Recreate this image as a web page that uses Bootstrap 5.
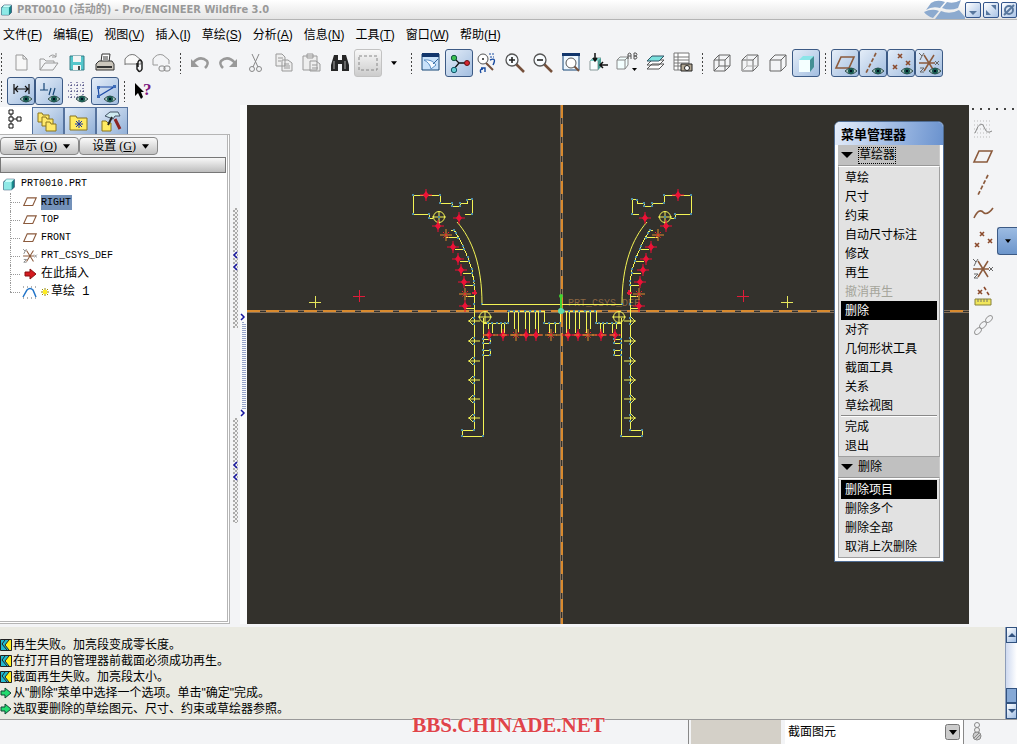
<!DOCTYPE html>
<html lang="zh-CN">
<head>
<meta charset="utf-8">
<meta name="viewport" content="width=device-width, initial-scale=1">
<title>PRT0010 (活动的) - Pro/ENGINEER Wildfire 3.0</title>
<link href="https://cdn.jsdelivr.net/npm/bootstrap@5.3.0/dist/css/bootstrap.min.css" rel="stylesheet">
<script src="https://cdn.jsdelivr.net/npm/bootstrap@5.3.0/dist/js/bootstrap.bundle.min.js"></script>
<style>
body{font:12px/16px "Liberation Sans","Noto Sans CJK SC",sans-serif;color:#000;background:#f3f4f6}
button,select{font:inherit;color:inherit;border:0;background:none;padding:0;border-radius:0}
svg{display:block;flex-shrink:0}
main{min-height:0}
.titlebar{height:20px;background:linear-gradient(#fff,#e4e4e4);border-bottom:1px solid #b4b4b4}
.titlebar h1{font:bold 11px/18px "DejaVu Sans Condensed","Noto Sans CJK SC",sans-serif;color:#999}
.winbtns{gap:2px}
.winbtn{width:16px;height:16px;border:1px solid #33558c;border-radius:2px;background:linear-gradient(135deg,#fff,#a9c3e6)}
.menus{height:29px;gap:11px;padding:0 3px}
.tool{width:28px;height:28px;border:1px solid transparent;border-radius:3px}
.tool svg,.tab svg{width:26px;height:26px}
.tool.on{border-color:#3c5a85;background:linear-gradient(135deg,#e4edf8,#a3bee0)}
.tool.soft{border-color:#c2c2c2;background:linear-gradient(#f8f8f8,#ccc)}
.grip{width:11px;height:22px;background:radial-gradient(circle,#444 1px,transparent 1px) 0 0/11px 4px}
.grip.first{width:7px;background-size:3px 4px;background-repeat:repeat-y}
.drop{width:24px}
.side{width:230px}
.tabs{padding-top:2px}
.tab{width:32px;height:27px;border:1px solid #56739e;border-bottom:0;background:linear-gradient(135deg,#dfeaf7,#93b1d8)}
.tab.now{background:#fff;border-color:#fff}
.tree-pane{border:solid #b5b5b5;border-width:1px 3px 3px 0;border-right-style:double;border-bottom-style:double;background:#fff}
.opts{background:#f3f4f6;height:22px;padding-top:2px}
.opt{width:79px;height:18px;border:1px solid #888;border-radius:4px;background:linear-gradient(#fafafa,#c3c3c3);gap:6px;font-family:"Liberation Serif","Noto Sans CJK SC",serif;line-height:15px;white-space:nowrap}
.headbar{height:16px;border:1px solid #777;background:linear-gradient(#f8f8f8,#bdbdbd);margin-right:1px}
.tree{font:10px/18px "Liberation Mono","Noto Sans CJK SC",monospace;padding-top:2px}
.tree .cn{font-size:12px}
.tree .leaf{height:18px}
.kids li{margin-left:10px;position:relative;padding-left:11px}
.kids li::before{content:"";position:absolute;left:0;top:0;bottom:0;border-left:1px dotted #999}
.kids li:last-child::before{bottom:9px}
.kids li::after{content:"";position:absolute;left:0;top:9px;width:10px;border-top:1px dotted #999}
.kids li svg{margin-right:2px}
.picked{background:#7391b9;line-height:15px;padding:0 1px 0 0}
.splitA{width:10px;padding-top:103px;gap:90px}
.splitB{width:7px;padding-top:208px;background:#fafbfc}
.handle{width:5px;background:repeating-conic-gradient(#aaa 0 25%,#f2f2f2 0 50%) 0 0/4px 4px}
.canvas{background:#33312c;min-width:0}
.manager{position:absolute;right:25px;top:16px;width:110px;background:#fff;border:1px solid #4f6c93;border-radius:6px 6px 0 0;padding:0 3px 3px}
.manager h2{font:bold 13px/23px "Noto Sans CJK SC",sans-serif;margin:0 -3px;padding-left:6px;border-radius:5px 5px 0 0;background:linear-gradient(100deg,#e6eefb,#a5bfe6 50%,#6a92ce)}
.sect{height:21px;background:#c0c0c0;border-bottom:1px solid #999;padding-left:3px;gap:5px;border-right:1px solid #ccc}
.sect .focusbox{border:1px dotted #000;line-height:15px}
.menu-items{background:#e2e2e2;border:1px solid #a0a0a0;border-top-color:#fff;padding:1px 2px}
.menu-items button{display:block;width:100%;height:19px;text-align:left;padding-left:4px;line-height:18px}
.menu-items .act{background:#000;color:#fff}
.menu-items button:disabled{color:#a5a59b}
.menu-items hr{margin:0;border-top:1px solid #888;border-bottom:1px solid #fff;opacity:1}
.rail{width:48px;background:#f3f4f6}
.rail .dots{height:10px;background:radial-gradient(circle,#444 1px,transparent 1px) 0 0/8px 8px repeat-x}
.flyout{width:20px;height:28px;border:1px solid #3c5a85;border-right:0;border-radius:3px 0 0 3px;background:linear-gradient(#9cbbe2,#6c95cb)}
.messages{height:93px;background:#eaeae2;border-bottom:1px solid #999;margin-top:3px}
.log{padding-top:10px}
.scroller{width:12px;border-left:1px solid #8d9db8;background:linear-gradient(90deg,#cfdaf0,#fff)}
.scroller button{height:16px;border:1px solid #31527f;background:linear-gradient(135deg,#fff,#9fbde4)}
.scroller .thumb{height:15px;border:1px solid #31527f;background:#86a9d6}
.statusbar{height:24px}
.stamp{top:-7px;font:bold 21px/24px "Liberation Serif",serif;color:#e0444a;text-shadow:0 0 2px #fff}
.divider{width:3px;border-left:1px solid #888}
.greybox{width:90px;background:#d4d0c8}
.picker{width:183px;border-right:1px solid #888;padding-left:4px}
.picker select{appearance:none;background:#fff;padding-left:3px;width:178px}
.picker svg{position:absolute;right:3px;top:4px;pointer-events:none}
</style>
</head>
<body class="d-flex flex-column vh-100 overflow-hidden m-0">
<svg width="0" height="0" class="position-absolute" aria-hidden="true"><defs>
<symbol id="eye" viewBox="0 0 12 8"><path d="M0 4Q6-2 12 4Q6 10 0 4Z" fill="#a9c4c0" stroke="#35504f"/><circle cx="6" cy="4" r="3" fill="#17594f"/><rect x="5" y="3" width="2" height="2" fill="#012"/></symbol>
<symbol id="plane" viewBox="0 0 26 26"><path d="M9 7H22L17 18H4Z" fill="none" stroke="#8b5a3c" stroke-width="1.6"/></symbol>
<symbol id="axis" viewBox="0 0 26 26"><path d="M18 3L8 23" fill="none" stroke="#8b5a3c" stroke-width="1.7" stroke-dasharray="4 2"/></symbol>
<symbol id="points" viewBox="0 0 26 26"><path d="M10 4l4 4m0-4l-4 4M18 11l4 4m0-4l-4 4M5 15l4 4m0-4l-4 4" stroke="#8b4a2c" stroke-width="1.6"/></symbol>
<symbol id="csys" viewBox="0 0 26 26"><path d="M3 13H19M8 5L18 21M18 5L8 21" stroke="#8b5a3c" stroke-width="1.5"/><path d="M3 3l3 3 2-3M6 6l-2 4M19 11l4 4m0-4l-4 4M4 18h4l-4 4h4" fill="none" stroke="#666"/></symbol>
<symbol id="cube" viewBox="0 0 26 26"><path d="M5 10H16V21H5ZM5 10L10 5H21L16 10M21 5V16L16 21" fill="none" stroke="#666"/></symbol>
<symbol id="solid" viewBox="0 0 16 16"><path d="M2 5L5 2H14V11L11 14H2Z" fill="#168b8b" stroke="#246"/><path d="M2 5H11V14H2Z" fill="#8ee9e6"/><path d="M3 5L5 2H14L11 5Z" fill="#c9fffa"/></symbol>
<symbol id="tri" viewBox="0 0 8 5"><path d="M0 0H8L4 5Z"/></symbol>
<symbol id="lens" viewBox="0 0 26 26"><path d="M14 14l8 8" stroke="#75503b" stroke-width="2.5"/><circle cx="10" cy="10" r="6" fill="#f8fcff" stroke="#555" stroke-width="1.3"/></symbol>
<symbol id="fail" viewBox="0 0 12 12"><path d="M.5.5H11.5V11.5H.5Z" fill="#20bcd0" stroke="#222"/><path d="M11 1V11H9L5 6L9 1Z" fill="#fff21c"/><path d="M5 1L2 5L7 11M9 1L5 6L9 11" fill="none" stroke="#222"/></symbol>
<symbol id="go" viewBox="0 0 12 12"><path d="M1 4H5V1L11 6L5 11V8H1Z" fill="#23dc70" stroke="#143"/></symbol>
<g id="star"><path d="M-6 0H6M0-6V6" stroke="#f20d35"/><path d="M0-4L3 0 0 4-3 0Z" fill="#ed1236"/></g>
<g id="spark"><path d="M-6 0H6M0-6V6" stroke="#e58a2c"/><path d="M-3-3L3 3M3-3L-3 3" stroke="#f3202f" stroke-dasharray="2 1"/></g>
<g id="node"><path d="M-6 0H6M-1-4L-5 0L-1 4" fill="none" stroke="#f4f455"/><path d="M0-4V-2M0 2V4" stroke="#4c8ba7" stroke-width="2"/></g>
<g id="half">
 <path d="M429 218V214H413V195H440V203H452V206H460V203H467V199H472V214H465M429 218H433M451 230H454L459 238 463 246 468 258 472 270 474 283V430H462V436H483V318M446 237H458M455 249H464M460 261H468M463 273H472M465 285H474M466 296H474M466 308H474M483 339H490V343H483M483 350H490V355H483M483 323H508V311H544V323H552M488 323V329M492 323V333M501 323V333M504 323V333M514 311V329M518 311V333M525 311V329M529 311V333M535 311V329M538 311V333M549 323V333" fill="none" stroke="#f4f455" shape-rendering="crispEdges"/>
 <g fill="none" stroke="#f4f455"><path d="M457 222C472 239 482 265 482 304"/><circle cx="439" cy="217" r="5.5"/><path d="M432 217H446M439 211V228"/><circle cx="485" cy="317" r="5.5"/><path d="M478 317H492M485 311V324"/></g>
 <path d="M413 195h0M440 195h0M440 203h0M452 203h0M452 206h0M460 206h0M460 203h0M467 200h0M472 199h0M472 214h0M413 214h0M429 214h0M429 218h0M439 217h0M454 230h0M456 233h0M458 238h0M463 246h0M464 249h0M468 257h0M469 261h0M472 269h0M472 273h0M474 281h0M474 285h0M474 304h0M482 304h0M462 430h0M474 430h0M462 436h0M483 436h0M483 339h0M490 339h0M490 343h0M483 343h0M483 350h0M490 350h0M490 355h0M483 355h0M488 323h0M492 323h0M497 323h0M501 323h0M505 323h0M508 323h0M509 311h0M514 311h0M519 311h0M525 311h0M530 311h0M535 311h0M540 311h0M544 323h0M549 323h0" stroke="#4c8ba7" stroke-width="2" stroke-linecap="square"/>
 <use href="#node" x="474" y="321"/><use href="#node" x="474" y="341"/><use href="#node" x="474" y="361"/><use href="#node" x="474" y="380"/><use href="#node" x="474" y="399"/><use href="#node" x="474" y="418"/>
 <use href="#star" x="426" y="195"/><use href="#star" x="459" y="218"/><use href="#star" x="438" y="226"/><use href="#spark" x="446" y="235"/><use href="#star" x="453" y="247"/><use href="#star" x="458" y="259"/><use href="#star" x="461" y="270"/><use href="#star" x="464" y="282"/><use href="#spark" x="465" y="294"/><use href="#star" x="465" y="306"/><path d="M472 293h5M475 290v5" stroke="#e11b39" stroke-width="2"/>
 <use href="#star" x="489" y="335"/><use href="#star" x="503" y="335"/><use href="#spark" x="516" y="335"/><use href="#star" x="526" y="335"/><use href="#star" x="536" y="335"/>
</g>
</defs></svg>

<header>
<div class="titlebar d-flex align-items-center">
 <svg width="13" height="16"><use href="#solid" width="13" height="16"/></svg>
 <h1 class="m-0 ms-1 flex-grow-1 text-nowrap">PRT0010 (活动的) - Pro/ENGINEER Wildfire 3.0</h1>
 <svg width="42" height="19" viewBox="0 0 42 19"><path d="M8 3Q14-1 22 2L17 8Q9 6 3 10ZM24 2Q31 4 38 0L35 8Q27 11 19 8ZM1 12Q9 8 16 11L10 18Q4 16 1 12ZM18 11Q27 15 36 10L42 17V19H12Z" fill="#8caacf"/></svg>
 <div class="winbtns d-flex">
 <button class="winbtn" aria-label="最小化"><svg width="14" height="14"><path d="M3 8H11L7 12Z" fill="#58779e"/></svg></button>
 <button class="winbtn" aria-label="还原"><svg width="14" height="14"><path d="M7 2H12V7ZM2 7V12H7Z" fill="#58779e"/></svg></button>
 <button class="winbtn" aria-label="关闭"><svg width="14" height="14"><circle cx="7" cy="7" r="4" fill="none" stroke="#58779e" stroke-width="2"/><path d="M2 12L12 2" stroke="#58779e" stroke-width="2"/></svg></button>
 </div>
</div>
<nav class="menus d-flex align-items-center text-nowrap" aria-label="主菜单">
 <button>文件(<u>F</u>)</button><button>编辑(<u>E</u>)</button><button>视图(<u>V</u>)</button><button>插入(<u>I</u>)</button><button>草绘(<u>S</u>)</button><button>分析(<u>A</u>)</button><button>信息(<u>N</u>)</button><button>工具(<u>T</u>)</button><button>窗口(<u>W</u>)</button><button>帮助(<u>H</u>)</button>
</nav>
<div class="d-flex align-items-center" role="toolbar" aria-label="标准">
 <span class="grip first"></span>
 <button class="tool" aria-label="新建"><svg viewBox="0 0 26 26"><path d="M8 5H15L19 9V20H8ZM15 5V9H19" fill="#f7f7f7" stroke="#999"/></svg></button>
 <button class="tool" aria-label="打开"><svg viewBox="0 0 26 26"><path d="M4 20V9H8L10 11H18V13M4 20L9 13H22L17 20ZM13 7Q17 3 20 7M20 3V7H16" fill="none" stroke="#999"/></svg></button>
 <button class="tool" aria-label="保存"><svg viewBox="0 0 26 26"><path d="M6 6H20V20H6Z" fill="#55c6cb" stroke="#357d86"/><path d="M9 6H17V12H9ZM9 15H17V20H9Z" fill="#f4f4f4"/><path d="M14 16h2v4h-2z" fill="#444"/></svg></button>
 <button class="tool" aria-label="打印"><svg viewBox="0 0 26 26"><path d="M9 12L10 4H18L17 12" fill="#fff" stroke="#333"/><path d="M11 7h5M11 9h5" stroke="#333"/><path d="M4 14L7 11H20L22 14V20H4Z" fill="#cbc6bc" stroke="#333"/><path d="M5 17H20" stroke="#333" stroke-width="2"/></svg></button>
 <button class="tool" aria-label="发送附件"><svg viewBox="0 0 26 26"><path d="M5 15V9Q9 3 15 5L21 10V14H5" fill="#fafafa" stroke="#777"/><path d="M17 13V19Q20 24 22 19V12Q20 8 18 12V17" fill="none" stroke="#222" stroke-width="1.5"/></svg></button>
 <button class="tool" aria-label="发送链接"><svg viewBox="0 0 26 26"><path d="M5 15V9Q9 3 15 5L21 10V14M5 15H10" fill="none" stroke="#999"/><rect x="11" y="16" width="6" height="5" rx="2" fill="none" stroke="#888"/><rect x="16" y="16" width="6" height="5" rx="2" fill="none" stroke="#888"/></svg></button>
 <span class="grip"></span>
 <button class="tool" aria-label="撤消"><svg viewBox="0 0 26 26"><path d="M6 13Q13 5 20 11Q22 14 18 18" fill="none" stroke="#999" stroke-width="2.5"/><path d="M4 9V17H12Z" fill="#999"/></svg></button>
 <button class="tool" aria-label="重做"><svg viewBox="0 0 26 26"><path d="M20 13Q13 5 6 11Q4 14 8 18" fill="none" stroke="#999" stroke-width="2.5"/><path d="M22 9V17H14Z" fill="#999"/></svg></button>
 <button class="tool" aria-label="剪切"><svg viewBox="0 0 26 26"><path d="M9 4L15 17M16 4L10 17" stroke="#888"/><circle cx="9" cy="19" r="2.5" fill="none" stroke="#888"/><circle cx="16" cy="19" r="2.5" fill="none" stroke="#888"/></svg></button>
 <button class="tool" aria-label="复制"><svg viewBox="0 0 26 26"><path d="M5 4H11L14 7V16H5Z M11 10H17L21 13V21H11Z" fill="#eee" stroke="#999"/><path d="M7 8h5M7 11h3M13 14h5M13 16h6M13 18h6" stroke="#999"/></svg></button>
 <button class="tool" aria-label="粘贴"><svg viewBox="0 0 26 26"><path d="M4 6H18V20H4ZM8 4H14V8H8ZM11 11H17L21 14V21H11Z" fill="#eee" stroke="#999"/><path d="M13 15h5M13 18h6" stroke="#999"/></svg></button>
 <button class="tool" aria-label="查找"><svg viewBox="0 0 26 26"><path d="M7 5h4v5h4V5h4l3 10v6h-7v-7h-4v7H4v-6Z" fill="#262626"/><path d="M7 11v8M18 11v8" stroke="#aaa"/></svg></button>
 <button class="tool soft" aria-label="选择框"><svg viewBox="0 0 26 26"><rect x="4" y="6" width="18" height="14" fill="none" stroke="#888" stroke-dasharray="3 2"/></svg></button>
 <button class="drop d-flex justify-content-center" aria-label="选择选项"><svg width="6" height="4"><use href="#tri" width="6" height="4"/></svg></button>
 <span class="grip"></span>
 <button class="tool" aria-label="重画"><svg viewBox="0 0 26 26"><path d="M4 4H21V20H4Z" fill="#c9e2fa" stroke="#174777"/><path d="M4 3H21V7H4Z" fill="#12366c"/><path d="M6 10Q14 9 18 15L13 19Q12 13 6 10Z" fill="#f4faff" stroke="#5b8fc4"/><path d="M15 14L20 9" stroke="#35679b"/></svg></button>
 <button class="tool on" aria-label="旋转中心"><svg viewBox="0 0 26 26"><path d="M8 8L13 13L8 19M13 13H20" fill="none" stroke="#111" stroke-width="1.3"/><circle cx="8" cy="8" r="2.7" fill="#39be50" stroke="#154"/><circle cx="8" cy="20" r="2.7" fill="#65cdd2" stroke="#156"/><circle cx="21" cy="13" r="2.5" fill="#d62631" stroke="#611"/></svg></button>
 <button class="tool" aria-label="定向模式"><svg viewBox="0 0 26 26"><path d="M12 13l7 7" stroke="#75503b" stroke-width="2"/><circle cx="9" cy="9" r="5" fill="#fff" stroke="#555"/><path d="M8 9h2M9 8v2" stroke="#222"/><path d="M15 4h6M16 7h4" stroke="#174aa0" stroke-dasharray="2 1"/><path d="M16 10q7-3 3 5M9 19q-4 0-2 4M7 18h4v4" fill="none" stroke="#174aa0" stroke-width="1.4"/></svg></button>
 <button class="tool" aria-label="放大"><svg viewBox="0 0 26 26"><use href="#lens"/><path d="M7 10h6M10 7v6" stroke="#222" stroke-width="1.6"/></svg></button>
 <button class="tool" aria-label="缩小"><svg viewBox="0 0 26 26"><use href="#lens"/><path d="M7 10h6" stroke="#222" stroke-width="1.6"/></svg></button>
 <button class="tool" aria-label="重新调整"><svg viewBox="0 0 26 26"><path d="M5 4H21V20H5Z" fill="#edf7ff" stroke="#174777"/><path d="M4 3H22V6H4Z" fill="#12366c"/><path d="M16 16l5 5" stroke="#75503b" stroke-width="2"/><circle cx="13" cy="13" r="5" fill="#fff" stroke="#555"/></svg></button>
 <button class="tool" aria-label="重定向"><svg viewBox="0 0 26 26"><path d="M4 11L7 8H15L12 11V20H4Z" fill="#f8ffff" stroke="#899"/><path d="M4 11L7 8H15L12 11Z" fill="#7ed5cc"/><path d="M12 11L15 8V17L12 20Z" fill="#489b91"/><path d="M9 3v7M7 8l2 3 2-3M22 15H14M17 12l-3 3 3 3" fill="none" stroke="#111" stroke-width="1.5"/></svg></button>
 <button class="tool" aria-label="视图列表"><svg viewBox="0 0 26 26"><path d="M3 10L6 7H14V15L11 19H3ZM3 10H11V19M11 10L14 7" fill="#f3ffff" stroke="#888"/><path d="M14 9V4q2-2 3 0v5M14 6h3M20 3v6h2q2-2 0-3h-2 2q2-2 0-3Z" fill="none" stroke="#555"/><path d="M18 18h5l-2.500 3Z"/></svg></button>
 <button class="tool" aria-label="层"><svg viewBox="0 0 26 26"><path d="M5 19L10 14H22L17 19ZM5 15L10 10H22L17 15Z" fill="#fff" stroke="#555"/><path d="M5 11L10 6H22L17 11Z" fill="#7ce1de" stroke="#356"/></svg></button>
 <button class="tool" aria-label="视图管理器"><svg viewBox="0 0 26 26"><path d="M4 3H19V20H4ZM4 7H19M4 10H19M4 13H19M4 16H19M8 3V20" fill="#fff" stroke="#777"/><path d="M11 14H22V21H11Z" fill="#b3a894" stroke="#222"/><circle cx="17" cy="18" r="2.5" fill="#fff" stroke="#222"/></svg></button>
 <span class="grip"></span>
 <button class="tool" aria-label="线框"><svg viewBox="0 0 26 26"><use href="#cube"/><path d="M10 5V16H21M5 21L10 16" fill="none" stroke="#666"/></svg></button>
 <button class="tool" aria-label="隐藏线"><svg viewBox="0 0 26 26"><use href="#cube"/><path d="M10 5V16H21M5 21L10 16" fill="none" stroke="#aaa"/></svg></button>
 <button class="tool" aria-label="无隐藏线"><svg viewBox="0 0 26 26"><use href="#cube"/></svg></button>
 <button class="tool on" aria-label="着色"><svg viewBox="0 0 26 26"><path d="M6 10H17V22H6Z" fill="#f4ffff"/><path d="M6 10L10 6H21L17 10Z" fill="#8be5e8"/><path d="M17 10L21 6V17L17 22Z" fill="#438f94"/></svg></button>
 <span class="grip"></span>
 <button class="tool on" aria-label="平面显示"><svg viewBox="0 0 26 26"><use href="#plane"/><use href="#eye" x="13" y="17" width="12" height="8"/></svg></button>
 <button class="tool on" aria-label="轴显示"><svg viewBox="0 0 26 26"><use href="#axis" x="-2"/><use href="#eye" x="12" y="17" width="12" height="8"/></svg></button>
 <button class="tool on" aria-label="点显示"><svg viewBox="0 0 26 26"><use href="#points"/><use href="#eye" x="13" y="17" width="12" height="8"/></svg></button>
 <button class="tool on" aria-label="坐标系显示"><svg viewBox="0 0 26 26"><use href="#csys"/><use href="#eye" x="13" y="17" width="12" height="8"/></svg></button>
</div>
<div class="d-flex align-items-center" role="toolbar" aria-label="草绘器">
 <span class="grip first"></span>
 <button class="tool on" aria-label="显示尺寸"><svg viewBox="0 0 26 26"><path d="M6 6V16M21 6V16M7 11H20M10 8L7 11L10 14M17 8L20 11L17 14" fill="none" stroke="#111" stroke-width="1.2"/><use href="#eye" x="12" y="17" width="12" height="8"/></svg></button>
 <button class="tool on" aria-label="显示约束"><svg viewBox="0 0 26 26"><path d="M8 5V12M4 12H12M15 10L13 17M19 10L17 17" stroke="#174777" stroke-width="1.2"/><use href="#eye" x="12" y="17" width="12" height="8"/></svg></button>
 <button class="tool" aria-label="显示栅格"><svg viewBox="0 0 26 26"><path d="M4 7H22M4 13H22M4 19H14M7 4V21M13 4V21M19 4V17" stroke="#226" stroke-dasharray="1 2"/><use href="#eye" x="12" y="17" width="12" height="8"/></svg></button>
 <button class="tool on" aria-label="显示顶点"><svg viewBox="0 0 26 26"><path d="M6 9L22 9L7 18Z" fill="none" stroke="#1c4ba6" stroke-width="1.2"/><path d="M5 8h3v3H5zM21 7h3v3h-3zM5 17h3v3H5z" fill="#3d6cb8"/><use href="#eye" x="12" y="17" width="12" height="8"/></svg></button>
 <span class="grip"></span>
 <button class="tool" aria-label="帮助"><svg viewBox="0 0 26 26"><path d="M4 5V18L7 15L10 21L12 19L10 14H13Z"/><text x="12" y="17" font-family="Liberation Serif" font-weight="bold" font-size="17" fill="#7b167e">?</text></svg></button>
</div>
</header>

<main class="d-flex flex-grow-1">
<section class="side d-flex flex-column" aria-label="模型树">
 <div class="tabs d-flex">
 <button class="tab now" aria-label="模型树"><svg viewBox="0 0 26 26"><path d="M8 2h4v4H8zM8 9h4v4H8zM8 16h4v4H8zM16 9h4v4h-4zM10 6v3M10 13v3M12 11h4" fill="#fff" stroke="#111"/></svg></button>
 <button class="tab" aria-label="文件夹"><svg viewBox="0 0 26 26"><g fill="#ffe96a" stroke="#8a741f"><path d="M5 5h4l1 2h6v7H5z"/><path d="M9 9h4l1 2h6v7H9z"/><path d="M13 14h4l1 2h5v7H13z"/></g></svg></button>
 <button class="tab" aria-label="收藏夹"><svg viewBox="0 0 26 26"><path d="M5 8h6l1 2h10v12H5z" fill="#ffeb62" stroke="#8a741f"/><path d="M10 16h8M14 12v8M11 13l6 6M17 13l-6 6" stroke="#1734a8"/></svg></button>
 <button class="tab" aria-label="连接"><svg viewBox="0 0 26 26"><path d="M5 13h4l2 2h3v8H5z" fill="#ffeb62" stroke="#8a741f"/><path d="M8 8L13 4H21L23 8H18L16 11Z" fill="#cfeaf0" stroke="#456"/><path d="M15 9L11 17" stroke="#222" stroke-width="2"/><path d="M18 11L23 21" stroke="#8b2323" stroke-width="3"/></svg></button>
 </div>
 <div class="tree-pane flex-grow-1">
 <div class="opts d-flex">
  <button class="opt d-flex align-items-center justify-content-end pe-2"><span>显示 (<u>O</u>)</span><svg width="7" height="5"><use href="#tri" width="7" height="5"/></svg></button>
  <button class="opt d-flex align-items-center justify-content-end pe-2"><span>设置 (<u>G</u>)</span><svg width="7" height="5"><use href="#tri" width="7" height="5"/></svg></button>
 </div>
 <div class="headbar"></div>
 <ul class="tree list-unstyled m-0 text-nowrap">
  <li class="leaf d-flex align-items-center"><svg width="17" height="15" class="me-1"><use href="#solid" x="2" width="14" height="15"/></svg>PRT0010.PRT</li>
  <li><ul class="kids list-unstyled">
  <li class="leaf d-flex align-items-center"><svg width="18" height="18"><use href="#plane" width="18" height="18"/></svg><span class="picked">RIGHT</span></li>
  <li class="leaf d-flex align-items-center"><svg width="18" height="18"><use href="#plane" width="18" height="18"/></svg>TOP</li>
  <li class="leaf d-flex align-items-center"><svg width="18" height="18"><use href="#plane" width="18" height="18"/></svg>FRONT</li>
  <li class="leaf d-flex align-items-center"><svg width="18" height="18"><use href="#csys" width="18" height="18"/></svg>PRT_CSYS_DEF</li>
  <li class="leaf d-flex align-items-center cn"><svg width="18" height="18"><path d="M4 7H9V4L15 9L9 14V11H4Z" fill="#d51a20" stroke="#811"/></svg>在此插入</li>
  <li class="leaf d-flex align-items-center cn"><svg width="18" height="18"><path d="M2 4H16M2 15H16" stroke="#666" stroke-dasharray="1 3"/><path d="M2 14L6 7Q9 4 12 7L15 14" fill="none" stroke="#2274c8" stroke-width="1.5"/></svg><svg width="8" height="12"><path d="M0 6H8M4 2V10M1 3L7 9M7 3L1 9" stroke="#9c8e00"/><path d="M2 4h4v4H2z" fill="#ffed22"/></svg>草绘 1</li>
  </ul></li>
 </ul>
 </div>
</section>
<div class="splitA d-flex flex-column align-items-center">
 <div class="handle"><svg width="5" height="120"><path d="M4 44L1 47L4 50M4 56L1 59L4 62" fill="none" stroke="#1414a0" stroke-width="1.5"/></svg></div>
 <div class="handle"><svg width="5" height="105"><path d="M4 44L1 47L4 50M4 56L1 59L4 62" fill="none" stroke="#1414a0" stroke-width="1.5"/></svg></div>
</div>
<div class="splitB"><svg width="7" height="105"><path d="M3 9V97M5 11V97" stroke="#334c94" stroke-dasharray="1 1"/><path d="M1 1L4 4L1 7M1 97L4 100L1 103" fill="none" stroke="#1414a0" stroke-width="1.5"/></svg></div>

<section class="canvas flex-grow-1 position-relative" aria-label="草绘">
 <svg class="w-100 h-100" viewBox="247 105 722 519" preserveAspectRatio="xMidYMid slice">
 <g fill="none" shape-rendering="crispEdges"><path d="M561.5 105V624M247 311.500H969" stroke="#85705a" stroke-width="3"/><path d="M561.5 105V624M247 311.500H969" stroke="#33312c"/><path d="M562 105V624M247 311H969" stroke="#d98a2e" stroke-width="2" stroke-dasharray="13 6"/></g>
 <text x="568" y="306" font-family="Liberation Mono" font-size="10" fill="#8b6742">PRT_CSYS_DEF</text>
 <use href="#half"/><use href="#half" transform="translate(1104 0) scale(-1 1)"/>
 <path d="M482 304H622" stroke="#f4f455" shape-rendering="crispEdges"/><path d="M484 335H620" stroke="#e58a2c" stroke-dasharray="5 4"/>
 <use href="#spark" x="551" y="335"/><path d="M309 302H321M315 296V308M781 302H793M787 296V308" stroke="#e6e65c" shape-rendering="crispEdges"/><path d="M353 296H365M359 290V302M737 296H749M743 290V302" stroke="#e11b39" shape-rendering="crispEdges"/>
 <path d="M561 296V311" stroke="#41d332" stroke-width="2"/><circle cx="561" cy="296" r="2" fill="#41d332"/><circle cx="561" cy="311" r="3" fill="#61dca9"/>
 </svg>
 <div class="manager">
 <h2>菜单管理器</h2>
 <div class="sect d-flex align-items-center"><svg width="12" height="6"><path d="M0 0H12L6 6Z"/></svg><span class="focusbox">草绘器</span></div>
 <div class="menu-items"><button>草绘</button><button>尺寸</button><button>约束</button><button>自动尺寸标注</button><button>修改</button><button>再生</button><button disabled>撤消再生</button><button class="act">删除</button><button>对齐</button><button>几何形状工具</button><button>截面工具</button><button>关系</button><button>草绘视图</button><hr><button>完成</button><button>退出</button></div>
 <div class="sect d-flex align-items-center"><svg width="12" height="6"><path d="M0 0H12L6 6Z"/></svg><span>删除</span></div>
 <div class="menu-items"><button class="act">删除项目</button><button>删除多个</button><button>删除全部</button><button>取消上次删除</button></div>
 </div>
</section>

<aside class="rail" aria-label="基准工具">
 <div class="dots"></div>
 <button class="tool d-block" aria-label="草绘工具"><svg viewBox="0 0 26 26"><path d="M4 5H22M4 9H22M4 13H22M4 17H22M4 21H22" stroke="#bbb" stroke-dasharray="1 2"/><path d="M5 17Q11 1 15 13Q17 18 22 15" fill="none" stroke="#888"/></svg></button>
 <button class="tool d-block" aria-label="平面"><svg viewBox="0 0 26 26"><use href="#plane"/></svg></button>
 <button class="tool d-block" aria-label="轴"><svg viewBox="0 0 26 26"><use href="#axis"/></svg></button>
 <button class="tool d-block" aria-label="曲线"><svg viewBox="0 0 26 26"><path d="M4 18Q9 7 14 13Q18 15 23 8" fill="none" stroke="#8b5a3c" stroke-width="1.6"/></svg></button>
 <div class="d-flex justify-content-between"><button class="tool" aria-label="点"><svg viewBox="0 0 26 26"><use href="#points"/></svg></button><button class="flyout d-flex align-items-center justify-content-center" aria-label="更多点"><svg width="6" height="4"><use href="#tri" width="6" height="4"/></svg></button></div>
 <button class="tool d-block" aria-label="坐标系"><svg viewBox="0 0 26 26"><use href="#csys"/></svg></button>
 <button class="tool d-block" aria-label="分析"><svg viewBox="0 0 26 26"><path d="M8 6l4 4m0-4l-4 4M14 3l2 3M17 8l2 3" stroke="#8b4a2c" stroke-width="1.6"/><path d="M5 15H21V21H5Z" fill="#f1e65b" stroke="#87823b"/><path d="M8 15v3M11 15v3M14 15v3M17 15v3" stroke="#776"/></svg></button>
 <button class="tool d-block" aria-label="参照"><svg viewBox="0 0 26 26"><g fill="none" stroke="#999"><ellipse cx="8" cy="19" rx="4" ry="2.5" transform="rotate(-45 8 19)"/><ellipse cx="13" cy="13" rx="4" ry="2.5" transform="rotate(-45 13 13)"/><ellipse cx="19" cy="7" rx="4" ry="2.5" transform="rotate(-45 19 7)"/></g></svg></button>
</aside>
</main>

<footer>
<div class="messages d-flex">
 <div class="log flex-grow-1" role="log">
 <div class="d-flex align-items-center"><svg width="13" height="12"><use href="#fail" width="12" height="12"/></svg>再生失败。加亮段变成零长度。</div>
 <div class="d-flex align-items-center"><svg width="13" height="12"><use href="#fail" width="12" height="12"/></svg>在打开目的管理器前截面必须成功再生。</div>
 <div class="d-flex align-items-center"><svg width="13" height="12"><use href="#fail" width="12" height="12"/></svg>截面再生失败。加亮段太小。</div>
 <div class="d-flex align-items-center"><svg width="13" height="12"><use href="#go" width="12" height="12"/></svg>从"删除"菜单中选择一个选项。单击"确定"完成。</div>
 <div class="d-flex align-items-center"><svg width="13" height="12"><use href="#go" width="12" height="12"/></svg>选取要删除的草绘图元、尺寸、约束或草绘器参照。</div>
 </div>
 <div class="scroller d-flex flex-column">
 <button aria-label="向上滚动"><svg width="9" height="14"><path d="M1 9H9L5 5Z" fill="#31527f"/></svg></button>
 <div class="flex-grow-1"></div><div class="thumb"></div>
 <button aria-label="向下滚动"><svg width="9" height="14"><path d="M1 5H9L5 9Z" fill="#31527f"/></svg></button>
 </div>
</div>
<div class="statusbar d-flex position-relative justify-content-end">
 <div class="stamp position-absolute start-50 translate-middle-x">BBS.CHINADE.NET</div>
 <div class="divider"></div>
 <div class="greybox"></div>
 <div class="picker position-relative d-flex"><select aria-label="选择过滤器"><option>截面图元</option></select><svg width="15" height="16"><rect x=".5" y=".5" width="14" height="15" rx="2" fill="#ccc" stroke="#777"/><path d="M4 6H12L8 11Z"/></svg></div>
 <svg width="53" height="24"><circle cx="13" cy="5" r="2.5" fill="none" stroke="#888"/><circle cx="13" cy="10" r="2.5" fill="#eee" stroke="#888"/><circle cx="13" cy="16" r="4" fill="#ccc" stroke="#888"/><path d="M10 18l5-5M12 19l5-5" stroke="#888"/></svg>
</div>
</footer>
</body>
</html>
